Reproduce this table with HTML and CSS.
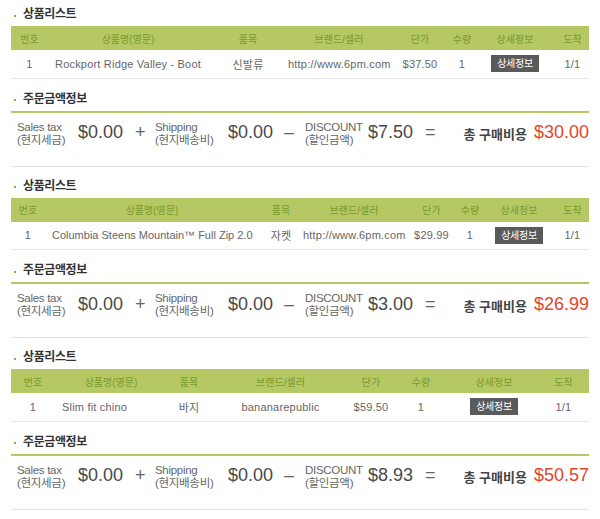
FILE: index.html
```html
<!DOCTYPE html>
<html lang="ko">
<head>
<meta charset="utf-8">
<title>주문 내역</title>
<link rel="stylesheet" href="styles.css">
</head>
<body>
<div class="page">

  <section class="block">
    <h2 class="sec-title">상품리스트</h2>
    <table class="goods goods-1">
      <colgroup>
        <col class="c-no"><col class="c-name"><col class="c-cat"><col class="c-brand"><col class="c-price"><col class="c-qty"><col class="c-detail"><col class="c-arrive">
      </colgroup>
      <thead>
        <tr><th>번호</th><th>상품명(영문)</th><th>품목</th><th>브랜드/셀러</th><th>단가</th><th>수량</th><th>상세정보</th><th>도착</th></tr>
      </thead>
      <tbody>
        <tr><td>1</td><td class="name">Rockport Ridge Valley - Boot</td><td>신발류</td><td>http://www.6pm.com</td><td>$37.50</td><td>1</td><td><span class="btn">상세정보</span></td><td>1/1</td></tr>
      </tbody>
    </table>
    <h2 class="sec-title sec-title--order">주문금액정보</h2>
    <div class="order">
      <div class="lbl lbl-tax">Sales tax<br>(현지세금)</div>
      <div class="amt amt-a">$0.00</div>
      <div class="op op-plus">+</div>
      <div class="lbl lbl-ship">Shipping<br>(현지배송비)</div>
      <div class="amt amt-b">$0.00</div>
      <div class="op op-minus">–</div>
      <div class="lbl lbl-disc">DISCOUNT<br>(할인금액)</div>
      <div class="amt amt-c">$7.50</div>
      <div class="op op-eq">=</div>
      <div class="total"><span class="total-lbl">총 구매비용</span><span class="total-amt">$30.00</span></div>
    </div>
  </section>

  <section class="block">
    <h2 class="sec-title">상품리스트</h2>
    <table class="goods goods-2">
      <colgroup>
        <col class="c-no"><col class="c-name"><col class="c-cat"><col class="c-brand"><col class="c-price"><col class="c-qty"><col class="c-detail"><col class="c-arrive">
      </colgroup>
      <thead>
        <tr><th>번호</th><th>상품명(영문)</th><th>품목</th><th>브랜드/셀러</th><th>단가</th><th>수량</th><th>상세정보</th><th>도착</th></tr>
      </thead>
      <tbody>
        <tr><td>1</td><td class="name name-tight">Columbia Steens Mountain™ Full Zip 2.0</td><td>자켓</td><td>http://www.6pm.com</td><td>$29.99</td><td>1</td><td><span class="btn">상세정보</span></td><td>1/1</td></tr>
      </tbody>
    </table>
    <h2 class="sec-title sec-title--order">주문금액정보</h2>
    <div class="order">
      <div class="lbl lbl-tax">Sales tax<br>(현지세금)</div>
      <div class="amt amt-a">$0.00</div>
      <div class="op op-plus">+</div>
      <div class="lbl lbl-ship">Shipping<br>(현지배송비)</div>
      <div class="amt amt-b">$0.00</div>
      <div class="op op-minus">–</div>
      <div class="lbl lbl-disc">DISCOUNT<br>(할인금액)</div>
      <div class="amt amt-c">$3.00</div>
      <div class="op op-eq">=</div>
      <div class="total"><span class="total-lbl">총 구매비용</span><span class="total-amt">$26.99</span></div>
    </div>
  </section>

  <section class="block">
    <h2 class="sec-title">상품리스트</h2>
    <table class="goods goods-3">
      <colgroup>
        <col class="c-no"><col class="c-name"><col class="c-cat"><col class="c-brand"><col class="c-price"><col class="c-qty"><col class="c-detail"><col class="c-arrive">
      </colgroup>
      <thead>
        <tr><th>번호</th><th>상품명(영문)</th><th>품목</th><th>브랜드/셀러</th><th>단가</th><th>수량</th><th>상세정보</th><th>도착</th></tr>
      </thead>
      <tbody>
        <tr><td>1</td><td class="name">Slim fit chino</td><td>바지</td><td>bananarepublic</td><td>$59.50</td><td>1</td><td><span class="btn">상세정보</span></td><td>1/1</td></tr>
      </tbody>
    </table>
    <h2 class="sec-title sec-title--order">주문금액정보</h2>
    <div class="order">
      <div class="lbl lbl-tax">Sales tax<br>(현지세금)</div>
      <div class="amt amt-a">$0.00</div>
      <div class="op op-plus">+</div>
      <div class="lbl lbl-ship">Shipping<br>(현지배송비)</div>
      <div class="amt amt-b">$0.00</div>
      <div class="op op-minus">–</div>
      <div class="lbl lbl-disc">DISCOUNT<br>(할인금액)</div>
      <div class="amt amt-c">$8.93</div>
      <div class="op op-eq">=</div>
      <div class="total"><span class="total-lbl">총 구매비용</span><span class="total-amt">$50.57</span></div>
    </div>
  </section>

</div>
</body>
</html>
```

FILE: styles.css
```css
* {
  box-sizing: border-box;
  margin: 0;
  padding: 0;
}

html,
body {
  background: #fff;
}

body {
  font-family: "Liberation Sans", "Noto Sans CJK KR", sans-serif;
  color: #555;
}

.page {
  width: 600px;
  padding: 5px 11px 0;
}

.block + .block {
  margin-top: 10px;
}

/* section titles */
.sec-title {
  display: flex;
  align-items: center;
  height: 18px;
  margin-bottom: 3px;
  font-size: 12px;
  line-height: 18px;
  font-weight: bold;
  color: #333;
  letter-spacing: -0.4px;
}

.sec-title::before {
  content: "";
  width: 2px;
  height: 2px;
  margin: 3px 7px 0 3px;
  background: #8db23a;
}

.sec-title--order {
  margin-top: 11px;
}

/* goods table */
.goods {
  width: 578px;
  border-collapse: collapse;
  table-layout: fixed;
}

.goods th {
  height: 24px;
  padding: 0;
  background: #b5c864;
  color: #7a9a2c;
  font-size: 10px;
  font-weight: normal;
  text-align: center;
  white-space: nowrap;
}

.goods td {
  height: 28px;
  padding: 0;
  border-bottom: 1px solid #e6e6e6;
  color: #666;
  font-size: 11px;
  letter-spacing: 0.2px;
  text-align: center;
  white-space: nowrap;
}

.goods td.name {
  text-align: left;
  padding-left: 7px;
}

.goods td.name-tight {
  letter-spacing: 0;
}

.btn {
  display: inline-block;
  width: 48px;
  height: 17px;
  line-height: 17px;
  background: #5a5a5a;
  color: #fff;
  font-size: 10px;
  letter-spacing: -0.3px;
  text-align: center;
  vertical-align: middle;
}

/* column widths per table */
.goods-1 .c-no { width: 37px; }
.goods-1 .c-name { width: 160px; }
.goods-1 .c-cat { width: 80px; }
.goods-1 .c-brand { width: 102px; }
.goods-1 .c-price { width: 60px; }
.goods-1 .c-qty { width: 24px; }
.goods-1 .c-detail { width: 82px; }
.goods-1 .c-arrive { width: 33px; }

.goods-2 .c-no { width: 34px; }
.goods-2 .c-name { width: 214px; }
.goods-2 .c-cat { width: 44px; }
.goods-2 .c-brand { width: 102px; }
.goods-2 .c-price { width: 53px; }
.goods-2 .c-qty { width: 24px; }
.goods-2 .c-detail { width: 74px; }
.goods-2 .c-arrive { width: 33px; }

.goods-3 .c-no { width: 44px; }
.goods-3 .c-name { width: 112px; }
.goods-3 .c-cat { width: 44px; }
.goods-3 .c-brand { width: 139px; }
.goods-3 .c-price { width: 42px; }
.goods-3 .c-qty { width: 58px; }
.goods-3 .c-detail { width: 88px; }
.goods-3 .c-arrive { width: 51px; }

/* order summary */
.order {
  display: flex;
  align-items: center;
  width: 578px;
  padding: 8px 0 19px 6px;
  border-top: 2px solid #b5c864;
  border-bottom: 1px solid #e2e2e2;
}

.lbl {
  flex: none;
  font-size: 11.5px;
  line-height: 13px;
  letter-spacing: -0.3px;
  color: #666;
  white-space: nowrap;
}

.lbl-tax { width: 61px; }
.lbl-ship { width: 73px; }
.lbl-disc { width: 63px; }

.amt {
  flex: none;
  margin-bottom: 3px;
  font-size: 18px;
  line-height: 20px;
  color: #4a4a4a;
  white-space: nowrap;
}

.amt-a { width: 57px; }
.amt-b { width: 56px; }
.amt-c { width: 57px; }

.op {
  flex: none;
  margin-bottom: 3px;
  font-size: 18px;
  line-height: 20px;
  color: #666;
}

.op-plus { width: 20px; }
.op-minus { width: 21px; }
.op-eq { width: 10px; }

.total {
  display: flex;
  align-items: center;
  margin-left: auto;
  white-space: nowrap;
}

.total-lbl {
  font-size: 13px;
  font-weight: bold;
  color: #444;
  margin-right: 7px;
}

.total-amt {
  margin-bottom: 3px;
  font-size: 18px;
  line-height: 20px;
  color: #e2452b;
}
```
